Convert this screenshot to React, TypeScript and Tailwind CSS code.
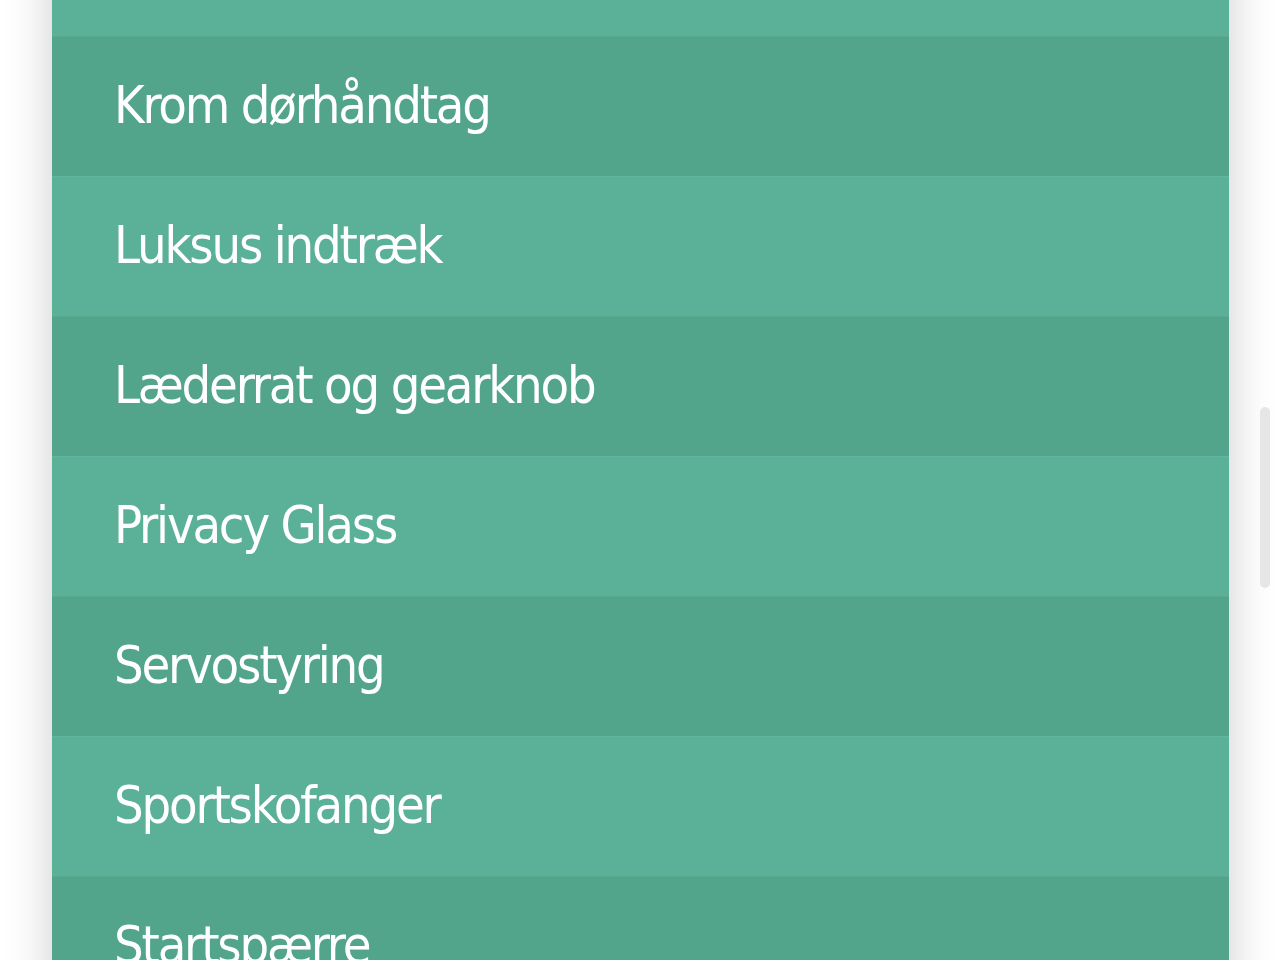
import React from 'react';

const items = [
  '',
  'Krom dørhåndtag',
  'Luksus indtræk',
  'Læderrat og gearknob',
  'Privacy Glass',
  'Servostyring',
  'Sportskofanger',
  'Startspærre',
];

export default function App() {
  return (
    <div className="relative h-[960px] w-[1280px] overflow-hidden bg-white">
      <div className="ml-[52px] mt-[-104px] w-[1177px] shadow-[0_0_44px_rgba(0,0,0,0.2)]">
        {items.map((label, i) => (
          <div
            key={i}
            className={
              'flex h-[140px] items-center border-t border-white/5 pl-[62px] pb-[4px] text-[52px] tracking-[-2.2px] text-white ' +
              (i % 2 === 0 ? 'bg-[#5bb098]' : 'bg-[#52a58a]')
            }
            style={{ fontFamily: '"Liberation Sans Narrow", "DejaVu Sans Condensed", Roboto, sans-serif' }}
          >
            {label}
          </div>
        ))}
      </div>
      {/* scrollbar thumb */}
      <div className="absolute left-[1260px] top-[407px] h-[181px] w-[10px] rounded-full bg-[#e6e6e6]" />
    </div>
  );
}
